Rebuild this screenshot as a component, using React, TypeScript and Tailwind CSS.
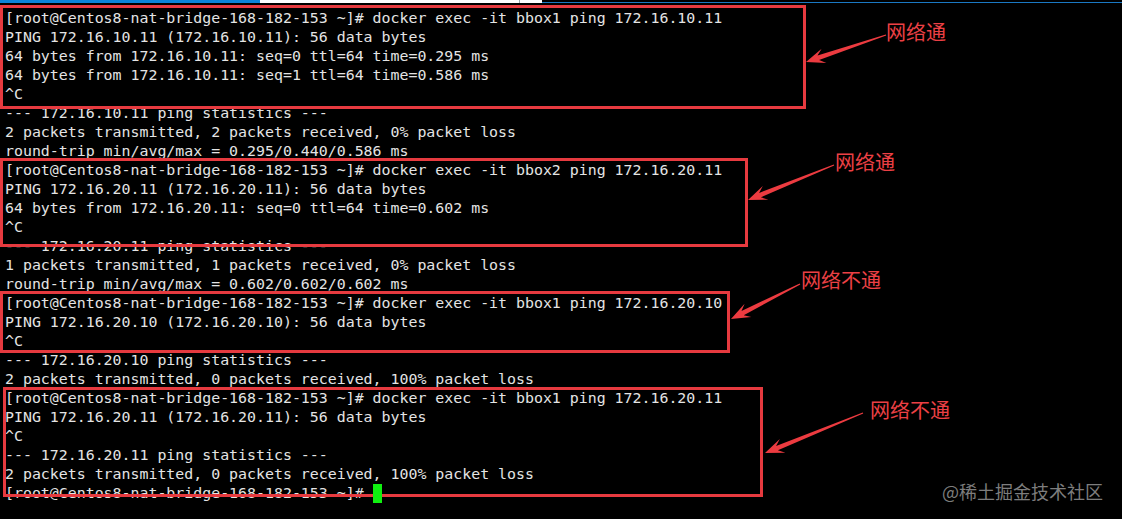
import React from 'react';

const PROMPT = '[root@Centos8-nat-bridge-168-182-153 ~]# ';

const lines: string[] = [
  PROMPT + 'docker exec -it bbox1 ping 172.16.10.11',
  'PING 172.16.10.11 (172.16.10.11): 56 data bytes',
  '64 bytes from 172.16.10.11: seq=0 ttl=64 time=0.295 ms',
  '64 bytes from 172.16.10.11: seq=1 ttl=64 time=0.586 ms',
  '^C',
  '--- 172.16.10.11 ping statistics ---',
  '2 packets transmitted, 2 packets received, 0% packet loss',
  'round-trip min/avg/max = 0.295/0.440/0.586 ms',
  PROMPT + 'docker exec -it bbox2 ping 172.16.20.11',
  'PING 172.16.20.11 (172.16.20.11): 56 data bytes',
  '64 bytes from 172.16.20.11: seq=0 ttl=64 time=0.602 ms',
  '^C',
  '--- 172.16.20.11 ping statistics ---',
  '1 packets transmitted, 1 packets received, 0% packet loss',
  'round-trip min/avg/max = 0.602/0.602/0.602 ms',
  PROMPT + 'docker exec -it bbox1 ping 172.16.20.10',
  'PING 172.16.20.10 (172.16.20.10): 56 data bytes',
  '^C',
  '--- 172.16.20.10 ping statistics ---',
  '2 packets transmitted, 0 packets received, 100% packet loss',
  PROMPT + 'docker exec -it bbox1 ping 172.16.20.11',
  'PING 172.16.20.11 (172.16.20.11): 56 data bytes',
  '^C',
  '--- 172.16.20.11 ping statistics ---',
  '2 packets transmitted, 0 packets received, 100% packet loss',
];

type Pt = [number, number];

// tapered "snagit style" arrow: thin tail, swept-back head
function arrowPoints(tail: Pt, tip: Pt) {
  const dx = tip[0] - tail[0];
  const dy = tip[1] - tail[1];
  const len = Math.hypot(dx, dy);
  const ux = dx / len;
  const uy = dy / len;
  const nx = -uy;
  const ny = ux;
  const at = (d: number, w: number): Pt => [tail[0] + ux * d + nx * w, tail[1] + uy * d + ny * w];
  const pts: Pt[] = [
    at(0, 0.6),
    at(len - 13, 2.4),
    at(len - 19, 7.5),
    at(len, 0),
    at(len - 19, -7.5),
    at(len - 13, -2.4),
    at(0, -0.6),
  ];
  return pts.map((p) => p.map((v) => v.toFixed(1)).join(',')).join(' ');
}

const arrows: { tail: Pt; tip: Pt }[] = [
  { tail: [886, 35], tip: [806, 62] },
  { tail: [834, 165], tip: [748, 200] },
  { tail: [800, 284], tip: [731, 319] },
  { tail: [863, 413], tip: [765, 453] },
];

export default function App() {
  return (
    <div className="relative w-[1122px] h-[519px] overflow-hidden bg-black">
      {/* leftover tab strip of the terminal window */}
      <div className="flex h-[3px]">
        <div className="w-[260px] bg-[#0a84d8]" />
        <div className="w-[259px] bg-white" />
        <div className="w-px bg-[#9aa4ad]" />
        <div className="w-[22px] bg-white" />
        <div className="flex-1 flex flex-col">
          <div className="flex-1 bg-black" />
          <div className="h-px bg-[#1a78c2]" />
        </div>
      </div>

      {/* terminal output */}
      <div
        className="pt-[6px] pl-[5px] text-[14.9px] leading-[19px] text-[#e4e4e4] whitespace-pre"
        style={{ fontFamily: '"DejaVu Sans Mono", "Liberation Mono", monospace' }}
      >
        {lines.map((l, i) => (
          <div key={i} className="h-[19px]">
            {l}
          </div>
        ))}
        <div className="h-[19px] flex items-start">
          <span>{PROMPT}</span>
          <span className="relative z-10 w-[9px] h-[19px] bg-[#10f010]" />
        </div>
      </div>

      {/* red annotation boxes */}
      <div className="absolute left-0 top-[5px] w-[806px] h-[104px] border-[3px] border-[#e63a3f]" />
      <div className="absolute left-0 top-[158px] w-[748px] h-[89px] border-[3px] border-[#e63a3f]" />
      <div className="absolute left-0 top-[291px] w-[730px] h-[62px] border-[3px] border-[#e63a3f]" />
      <div className="absolute left-[3px] top-[387px] w-[760px] h-[110px] border-[3px] border-[#e63a3f]" />

      <svg className="absolute inset-0" width={1122} height={519}>
        {arrows.map((a, i) => (
          <polygon key={i} points={arrowPoints(a.tail, a.tip)} fill="#ec3b40" />
        ))}
      </svg>

      {/* labels */}
      <div
        className="absolute inset-0 text-[20px] leading-[20px] text-[#ec4045]"
        style={{ fontFamily: '"Noto Sans CJK SC", "Noto Sans", sans-serif' }}
      >
        <span className="absolute left-[886px] top-[22px]">网络通</span>
        <span className="absolute left-[835px] top-[152px]">网络通</span>
        <span className="absolute left-[801px] top-[270px]">网络不通</span>
        <span className="absolute left-[870px] top-[400px]">网络不通</span>
        <span className="absolute left-[942px] top-[481px] text-[18px] text-[#7d7d7d]">@稀土掘金技术社区</span>
      </div>
    </div>
  );
}
